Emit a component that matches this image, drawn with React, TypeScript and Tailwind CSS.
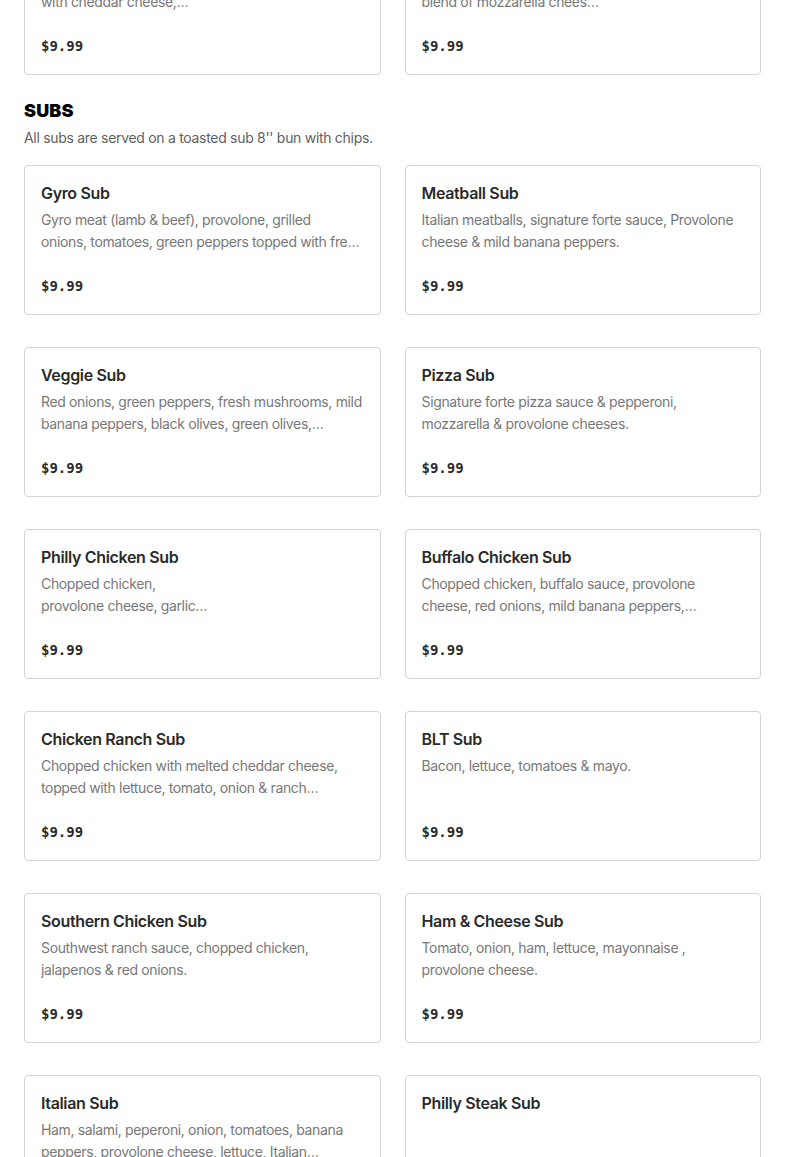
import React from "react";

type Item = { name: string; desc: string; price: string };

const prev: Item[] = [
  { name: "Cheeseburger Sub", desc: "Seasoned ground beef, grilled onions topped\nwith cheddar cheese,\nlettuce, tomato & mayo", price: "$9.99" },
  { name: "Three Cheese Sub", desc: "Signature forte sauce with a\nblend of mozzarella chees\nprovolone & cheddar", price: "$9.99" },
];

const subs: Item[] = [
  { name: "Gyro Sub", desc: "Gyro meat (lamb & beef), provolone, grilled\nonions, tomatoes, green peppers topped with fresh tzatziki sauce.", price: "$9.99" },
  { name: "Meatball Sub", desc: "Italian meatballs, signature forte sauce, Provolone cheese & mild banana peppers.", price: "$9.99" },
  { name: "Veggie Sub", desc: "Red onions, green peppers, fresh mushrooms, mild\nbanana peppers, black olives, green olives,\ntomatoes & provolone cheese.", price: "$9.99" },
  { name: "Pizza Sub", desc: "Signature forte pizza sauce & pepperoni, mozzarella & provolone cheeses.", price: "$9.99" },
  { name: "Philly Chicken Sub", desc: "Chopped chicken,\nprovolone cheese, garlic\nmayo, grilled onions & green peppers.", price: "$9.99" },
  { name: "Buffalo Chicken Sub", desc: "Chopped chicken, buffalo sauce, provolone cheese, red onions, mild banana peppers,\nranch dressing.", price: "$9.99" },
  { name: "Chicken Ranch Sub", desc: "Chopped chicken with melted cheddar cheese, topped with lettuce, tomato, onion & ranch\ndressing.", price: "$9.99" },
  { name: "BLT Sub", desc: "Bacon, lettuce, tomatoes & mayo.", price: "$9.99" },
  { name: "Southern Chicken Sub", desc: "Southwest ranch sauce, chopped chicken, jalapenos & red onions.", price: "$9.99" },
  { name: "Ham & Cheese Sub", desc: "Tomato, onion, ham, lettuce, mayonnaise , provolone cheese.", price: "$9.99" },
  { name: "Italian Sub", desc: "Ham, salami, peperoni, onion, tomatoes, banana peppers, provolone cheese, lettuce, Italian\ndressing.", price: "$9.99" },
  { name: "Philly Steak Sub", desc: "", price: "$9.99" },
];

function Card({ item }: { item: Item }) {
  return (
    <div className="flex h-[150px] flex-col rounded-[4px] border border-[#d4d4d4] bg-white px-4 pb-[18px] pt-[15px]">
      <div className="text-[16px] font-semibold leading-6 tracking-[-0.35px] text-[#2a2a2a]">{item.name}</div>
      <div className="mt-1 h-[44px] overflow-hidden whitespace-pre-line text-[14px] leading-[22px] tracking-[-0.35px] text-[#787878] line-clamp-2">
        {item.desc}
      </div>
      <div className="mt-auto font-['DejaVu_Sans_Mono',monospace] text-[14px] font-bold leading-5 text-[#2a2a2a]">
        {item.price}
      </div>
    </div>
  );
}

export default function App() {
  return (
    <div className="h-[1157px] overflow-hidden bg-white px-6 font-['Inter',sans-serif]">
      <div className="-mt-[75px] grid grid-cols-2 gap-x-6">
        {prev.map((p) => (
          <Card key={p.name} item={p} />
        ))}
      </div>
      <h2 className="mt-6 text-[18px] font-black uppercase leading-6 tracking-[0.01em] text-black">Subs</h2>
      <p className="mt-[5px] text-[14px] leading-5 tracking-[-0.3px] text-[#5f5f5f]">
        All subs are served on a toasted sub 8'' bun with chips.
      </p>
      <div className="mt-[17px] grid grid-cols-2 gap-x-6 gap-y-8">
        {subs.map((s) => (
          <Card key={s.name} item={s} />
        ))}
      </div>
    </div>
  );
}
